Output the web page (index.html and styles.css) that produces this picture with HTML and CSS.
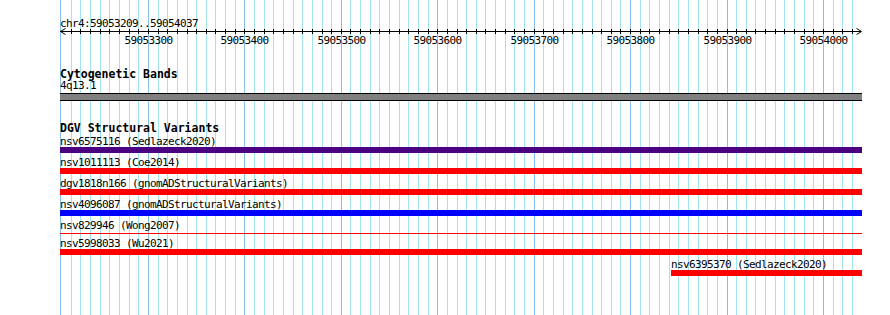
FILE: index.html
```html
<!DOCTYPE html>
<html>
<head>
<meta charset="utf-8">
<title>Genome browser</title>
<link rel="stylesheet" href="styles.css">
</head>
<body>
<div class="page">
  <svg class="grid" width="890" height="315" viewBox="0 0 890 315">
    <path class="minor" d="M71.5 0v315M80.5 0v315M90.5 0v315M100.5 0v315M109.5 0v315M119.5 0v315M129.5 0v315M138.5 0v315M158.5 0v315M167.5 0v315M177.5 0v315M187.5 0v315M196.5 0v315M206.5 0v315M215.5 0v315M225.5 0v315M235.5 0v315M254.5 0v315M264.5 0v315M273.5 0v315M283.5 0v315M293.5 0v315M302.5 0v315M312.5 0v315M322.5 0v315M331.5 0v315M350.5 0v315M360.5 0v315M370.5 0v315M379.5 0v315M389.5 0v315M399.5 0v315M408.5 0v315M418.5 0v315M428.5 0v315M447.5 0v315M457.5 0v315M466.5 0v315M476.5 0v315M485.5 0v315M495.5 0v315M505.5 0v315M514.5 0v315M524.5 0v315M543.5 0v315M553.5 0v315M563.5 0v315M572.5 0v315M582.5 0v315M592.5 0v315M601.5 0v315M611.5 0v315M620.5 0v315M640.5 0v315M649.5 0v315M659.5 0v315M669.5 0v315M678.5 0v315M688.5 0v315M698.5 0v315M707.5 0v315M717.5 0v315M736.5 0v315M746.5 0v315M755.5 0v315M765.5 0v315M775.5 0v315M784.5 0v315M794.5 0v315M804.5 0v315M813.5 0v315M833.5 0v315M842.5 0v315M852.5 0v315"/>
    <path class="major" d="M60.5 0v315M148.5 0v315M244.5 0v315M341.5 0v315M437.5 0v315M534.5 0v315M630.5 0v315M727.5 0v315M823.5 0v315"/>
  </svg>

  <div class="content">
    <div class="locus">chr4:59053209..59054037</div>

    <svg class="ruler" width="890" height="17" viewBox="0 0 890 17">
      <path class="axis" d="M60 2.5H861"/>
      <path class="ticks" d="M71.5 0v5M80.5 0v5M90.5 0v5M100.5 0v5M109.5 0v5M119.5 0v5M129.5 0v5M138.5 0v5M148.5 0v5M158.5 0v5M167.5 0v5M177.5 0v5M187.5 0v5M196.5 0v5M206.5 0v5M215.5 0v5M225.5 0v5M235.5 0v5M244.5 0v5M254.5 0v5M264.5 0v5M273.5 0v5M283.5 0v5M293.5 0v5M302.5 0v5M312.5 0v5M322.5 0v5M331.5 0v5M341.5 0v5M350.5 0v5M360.5 0v5M370.5 0v5M379.5 0v5M389.5 0v5M399.5 0v5M408.5 0v5M418.5 0v5M428.5 0v5M437.5 0v5M447.5 0v5M457.5 0v5M466.5 0v5M476.5 0v5M485.5 0v5M495.5 0v5M505.5 0v5M514.5 0v5M524.5 0v5M534.5 0v5M543.5 0v5M553.5 0v5M563.5 0v5M572.5 0v5M582.5 0v5M592.5 0v5M601.5 0v5M611.5 0v5M620.5 0v5M630.5 0v5M640.5 0v5M649.5 0v5M659.5 0v5M669.5 0v5M678.5 0v5M688.5 0v5M698.5 0v5M707.5 0v5M717.5 0v5M727.5 0v5M736.5 0v5M746.5 0v5M755.5 0v5M765.5 0v5M775.5 0v5M784.5 0v5M794.5 0v5M804.5 0v5M813.5 0v5M823.5 0v5M833.5 0v5M842.5 0v5M852.5 0v5"/>
      <path class="arrow" d="M65.5 -0.5L60.5 2.5L65.5 5.5M856.5 -0.5L861.5 2.5L856.5 5.5"/>
      <text x="148.5" y="15">59053300</text>
      <text x="244.5" y="15">59053400</text>
      <text x="341.5" y="15">59053500</text>
      <text x="437.5" y="15">59053600</text>
      <text x="534.5" y="15">59053700</text>
      <text x="630.5" y="15">59053800</text>
      <text x="727.5" y="15">59053900</text>
      <text x="823.5" y="15">59054000</text>
    </svg>

    <section class="track cyto">
      <h2 class="track-title">Cytogenetic Bands</h2>
      <div class="feat-label">4q13.1</div>
      <div class="band"></div>
    </section>

    <section class="track dgv">
      <h2 class="track-title">DGV Structural Variants</h2>
      <div class="feature">
        <div class="feat-label">nsv6575116 (Sedlazeck2020)</div>
        <div class="bar purple"></div>
      </div>
      <div class="feature">
        <div class="feat-label">nsv1011113 (Coe2014)</div>
        <div class="bar red"></div>
      </div>
      <div class="feature">
        <div class="feat-label">dgv1818n166 (gnomADStructuralVariants)</div>
        <div class="bar red"></div>
      </div>
      <div class="feature">
        <div class="feat-label">nsv4096087 (gnomADStructuralVariants)</div>
        <div class="bar blue"></div>
      </div>
      <div class="feature">
        <div class="feat-label">nsv829946 (Wong2007)</div>
        <div class="bar red thin"></div>
      </div>
      <div class="feature">
        <div class="feat-label">nsv5998033 (Wu2021)</div>
        <div class="bar red"></div>
      </div>
      <div class="feature" style="margin-left: 611px; width: 191px;">
        <div class="feat-label">nsv6395370 (Sedlazeck2020)</div>
        <div class="bar red"></div>
      </div>
    </section>
  </div>
</div>
</body>
</html>
```

FILE: styles.css
```css
html, body {
  margin: 0;
  padding: 0;
  background: #ffffff;
}

body {
  font-family: "DejaVu Sans Mono", "Liberation Mono", monospace;
  color: #000000;
}

.page {
  position: relative;
  width: 890px;
  height: 315px;
  overflow: hidden;
}

.grid {
  position: absolute;
  top: 0;
  left: 0;
  display: block;
}

.grid path {
  fill: none;
  stroke-width: 1;
  shape-rendering: crispEdges;
}

.grid .minor {
  stroke: #a2e4ee;
}

.grid .major {
  stroke: #86c0ea;
}

.content {
  position: relative;
}

.locus {
  margin: 18px 0 0 60px;
  font-size: 11px;
  line-height: 11px;
  letter-spacing: -0.62px;
  white-space: nowrap;
}

.ruler {
  display: block;
  overflow: visible;
}

.ruler path {
  fill: none;
  stroke: #000000;
  stroke-width: 1;
}

.ruler .axis,
.ruler .ticks {
  shape-rendering: crispEdges;
}

.ruler text {
  font-family: "DejaVu Sans Mono", monospace;
  font-size: 11px;
  letter-spacing: -0.62px;
  text-anchor: middle;
  fill: #000000;
}

.track {
  margin-left: 60px;
  width: 802px;
}

.track-title {
  margin: 0;
  font-size: 11.5px;
  line-height: 12px;
  font-weight: bold;
  white-space: nowrap;
}

.feat-label {
  font-size: 11px;
  line-height: 11px;
  letter-spacing: -0.62px;
  white-space: nowrap;
}

.cyto {
  margin-top: 23px;
}

.cyto .track-title {
  line-height: 11px;
}

.band {
  margin-top: 2px;
  height: 6px;
  background: #808080;
  border-top: 1px solid #000000;
  border-bottom: 1px solid #000000;
}

.dgv {
  margin-top: 21px;
}

.feature {
  margin-top: 4px;
}

.dgv .track-title + .feature {
  margin-top: 2px;
}

.bar {
  height: 6px;
}

.bar.thin {
  height: 1px;
  margin: 2px 0 3px;
}

.purple {
  background: #4b0082;
}

.red {
  background: #ff0000;
}

.blue {
  background: #0000ff;
}
```
